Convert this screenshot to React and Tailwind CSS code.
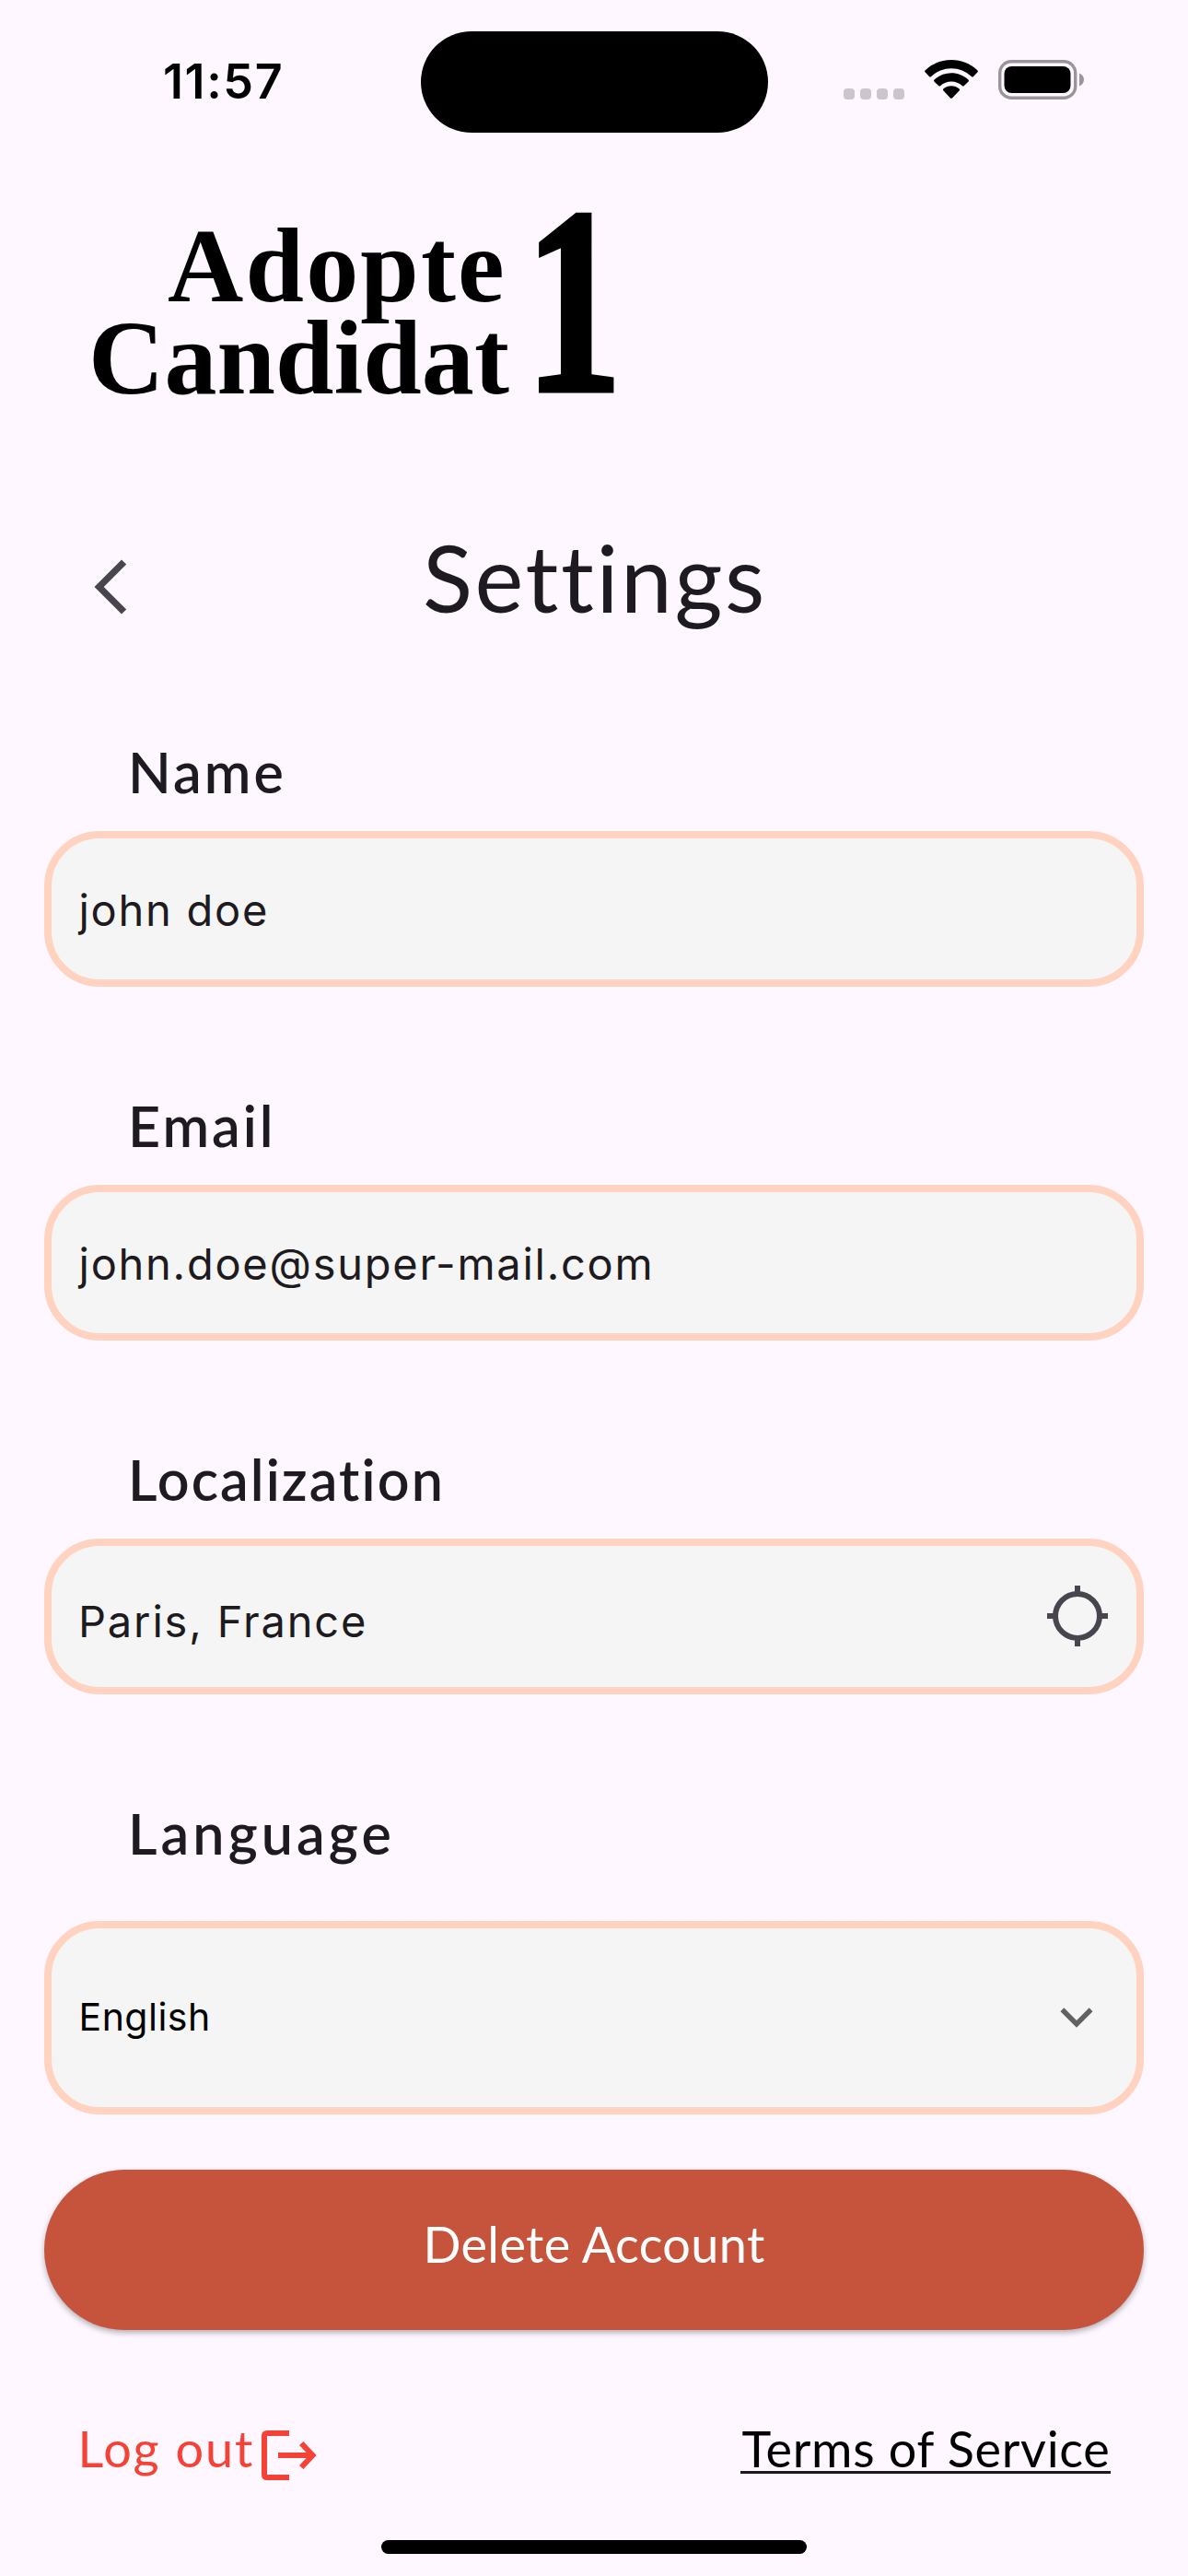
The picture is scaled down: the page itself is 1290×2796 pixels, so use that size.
import React from "react";

function StatusBar() {
  return (
    <header className="flex h-[177px] items-start">
      <div className="ml-[177px] mt-[57px] w-[280px] font-['Inter',sans-serif] text-[52px] font-semibold leading-[63px] tracking-[1.6px] text-black">
        11:57
      </div>
      <div className="mt-[33.5px] h-[110.5px] w-[377px] rounded-[56px] bg-black" />
      <div className="ml-[82px] mt-[96px] flex gap-[6.5px]">
        <span className="h-[11.5px] w-[11.5px] rounded-[4px] bg-[#cbc6cd]" />
        <span className="h-[11.5px] w-[11.5px] rounded-[4px] bg-[#cbc6cd]" />
        <span className="h-[11.5px] w-[11.5px] rounded-[4px] bg-[#cbc6cd]" />
        <span className="h-[11.5px] w-[11.5px] rounded-[4px] bg-[#cbc6cd]" />
      </div>
      <svg className="ml-[22px] mt-[65px] h-[42px] w-[58px]" viewBox="0 0 58 42" fill="black">
        <path d="M29 0C40 0 50 4.200 57.300 11.300Q58.400 12.400 57.300 13.600L53 18Q52 19 50.900 18A31.500 31.500 0 0 0 7.100 18Q6 19 5 18L.7 13.600Q-.4 12.400 .7 11.300C8 4.200 18 0 29 0Z" />
        <path d="M29 14.300C36 14.300 42.500 17 47.400 21.500Q48.500 22.600 47.400 23.700L42.900 28.100Q41.800 29.100 40.700 28.100A17.200 17.200 0 0 0 17.300 28.100Q16.200 29.100 15.100 28.100L10.600 23.700Q9.500 22.600 10.600 21.500C15.500 17 22 14.300 29 14.300Z" />
        <path d="M29 28.300C32.300 28.300 35.200 29.500 37.400 31.300Q38.600 32.400 37.500 33.500L30.200 41.200Q29 42.400 27.800 41.200L20.500 33.500Q19.400 32.400 20.600 31.300C22.800 29.500 25.700 28.300 29 28.300Z" />
      </svg>
      <svg className="ml-[22px] mt-[65px] h-[43px] w-[94px]" viewBox="0 0 94 43">
        <rect x="1.700" y="1.700" width="82" height="39.500" rx="12.500" fill="none" stroke="#9a959b" strokeWidth="3.400" />
        <rect x="6.500" y="7" width="72" height="29" rx="8" fill="black" />
        <path d="M88 14.500C91 15.800 93 18.300 93 21.500S91 27.200 88 28.500Z" fill="#9a959b" />
      </svg>
    </header>
  );
}

function Logo() {
  return (
    <svg
      className="ml-[96px] mt-[49px] h-[204px] w-[580px] shrink-0 overflow-visible font-['Liberation_Serif',serif] font-bold"
      viewBox="0 0 580 204"
      aria-label="Adopte 1 Candidat"
    >
      <text x="86" y="100.500" className="text-[114px] tracking-[2.2px]">Adopte</text>
      <text x="0" y="201" className="text-[114px] tracking-[0.1px]">Candidat</text>
      <text transform="translate(474 198) scale(.73 1)" className="text-[289px]" stroke="black" strokeWidth="5">
        1
      </text>
    </svg>
  );
}

function TitleRow() {
  return (
    <div className="mt-[134px] grid h-[120px] grid-cols-[459px_1fr] items-start">
      <svg className="ml-[102px] mt-[43px] h-[60px] w-[36px]" viewBox="0 0 36 60" fill="#49454f">
        <path d="M30 .4 35.200 5.500 10.700 30 35.200 54.500 30 59.600.5 30Z" />
      </svg>
      <h1 className="pt-[2px] text-[100px] leading-[120px] tracking-[2.6px]">Settings</h1>
    </div>
  );
}

function Label({ className, children }) {
  return (
    <div className={"ml-[139px] h-[73px] pt-[2px] text-[61px] font-semibold leading-[73px] " + className}>
      {children}
    </div>
  );
}

const fieldBox =
  "mx-[48px] flex items-center justify-between rounded-[60px] border-[8px] border-[#ffd3c0] bg-[#f5f5f5] font-['Inter',sans-serif] text-[47px] leading-[57px]";

export default function App() {
  return (
    <div className="flex h-[2796px] w-[1290px] flex-col overflow-hidden bg-[#fef7ff] font-['Lato',sans-serif] text-[#1d1b20]">
      <StatusBar />
      <Logo />
      <TitleRow />

      <section className="mt-[114.5px] h-[384px]">
        <Label className="tracking-[3.1px]">Name</Label>
        <div className={fieldBox + " mt-[30.5px] h-[168.5px] pl-[29.5px] pt-[3px]"}>
          <span className="tracking-[1.74px]">john doe</span>
        </div>
      </section>

      <section className="h-[384px]">
        <Label className="tracking-[3px]">Email</Label>
        <div className={fieldBox + " mt-[30.5px] h-[168.5px] pl-[29.5px] pt-[3px]"}>
          <span className="tracking-[1.75px]">john.doe@super-mail.com</span>
        </div>
      </section>

      <section className="h-[384px]">
        <Label className="tracking-[2.1px]">Localization</Label>
        <div className={fieldBox + " mt-[30.5px] h-[168.5px] pl-[29px] pr-[31px]"}>
          <span className="pt-[11px] tracking-[1.85px]">Paris, France</span>
          <svg className="h-[66px] w-[66px]" viewBox="0 0 66 66" fill="none" stroke="#49454f" strokeWidth="6">
            <circle cx="33" cy="33" r="24" />
            <path d="M33 0v8M33 58v8M0 33h8M58 33h8" />
          </svg>
        </div>
      </section>

      <section>
        <Label className="tracking-[4.1px]">Language</Label>
        <div className={fieldBox + " mt-[61px] h-[210.5px] pl-[29.5px] pr-[47px]"}>
          <span className="pb-[2px] text-[41px] leading-[50px] tracking-[0.5px] text-black">English</span>
          <svg className="h-[22px] w-[36px]" viewBox="0 0 36 22" fill="#616161">
            <path d="M4.300.3 18 13.900 31.700.3 35.500 4.200 18 21.700.5 4.200Z" />
          </svg>
        </div>
      </section>

      <button className="mx-[48px] mt-[59.5px] flex h-[174.5px] shrink-0 items-center justify-center rounded-full bg-[#c6533c] pb-[13px] text-[54px] leading-[65px] tracking-[0.35px] text-white shadow-[0_3px_6px_rgba(0,0,0,0.3)]">
        Delete Account
      </button>

      <div className="mt-[94px] flex items-start justify-between pl-[84.5px] pr-[84px] text-[54px] leading-[65px]">
        <a className="flex items-start text-[#f44336]">
          <span className="w-[199.5px] pt-[2px] tracking-[1.94px]">Log out</span>
          <svg className="mt-[14.5px] h-[54px] w-[60px]" viewBox="0 0 60 54" fill="none" stroke="#f44336" strokeWidth="6">
            <path d="M30 3H6Q3 3 3 6V48Q3 51 6 51H30M18 27H55M43.200 14 55.500 27 43.200 40" />
          </svg>
        </a>
        <a className="h-[62px] w-[402px] whitespace-nowrap border-b-[3px] border-[#1d1b20] pl-[1.5px] pt-[2px] tracking-[0.7px] text-black">
          Terms of Service
        </a>
      </div>

      <div className="mx-auto mb-[24px] mt-auto h-[15px] w-[462px] rounded-full bg-black" />
    </div>
  );
}
